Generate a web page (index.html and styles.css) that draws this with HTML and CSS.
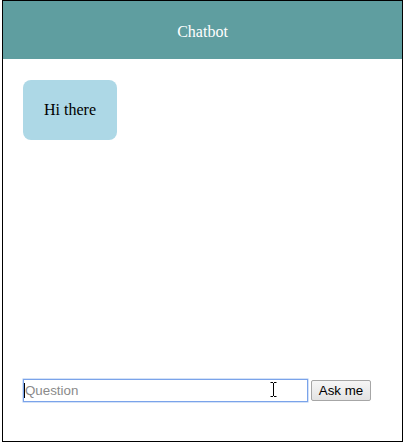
FILE: index.html
```html
<!DOCTYPE html>
<html>
<head>
<meta charset="utf-8">
<link rel="stylesheet" href="styles.css">
</head>
<body>
<div class="chat">
  <div class="header">Chatbot</div>
  <div class="messages">
    <div class="bubble">Hi there</div>
  </div>
  <form class="ask">
    <div class="field">
      <input class="question" type="text" placeholder="Question">
      <span class="caret"></span>
      <svg class="ibeam" width="7" height="15" viewBox="0 0 7 15"><path d="M0.5 0.5h2.5M4 0.5h2.5M3.5 1v13M0.5 14.5h2.5M4 14.5h2.5" stroke="#000" stroke-width="1" fill="none"/></svg>
    </div>
    <button class="btn" type="button">Ask me</button>
  </form>
</div>
</body>
</html>
```
FILE: styles.css
```css
html, body {
  margin: 0;
  padding: 0;
  background: #fff;
}
.chat {
  box-sizing: border-box;
  width: 401px;
  height: 442px;
  margin-left: 2px;
  border: 1px solid #000;
  display: flex;
  flex-direction: column;
  font-family: "Liberation Serif", "Times New Roman", serif;
  font-size: 16px;
}
.header {
  height: 58px;
  background: #5f9ea0;
  color: #fff;
  display: flex;
  align-items: center;
  justify-content: center;
  padding-top: 4px;
  box-sizing: border-box;
}
.messages {
  flex: 1;
  padding: 21px 20px 0;
}
.bubble {
  display: inline-block;
  background: #add8e6;
  border-radius: 8px;
  padding: 20px 21px;
  line-height: 20px;
  color: #000;
}
.ask {
  display: flex;
  align-items: center;
  gap: 3px;
  padding: 0 20px 39px;
  margin: 0;
}
.field {
  position: relative;
  display: flex;
}
.question {
  box-sizing: border-box;
  width: 285px;
  height: 23px;
  margin: 0;
  padding: 1px 1px;
  border: 1px solid #7aa3ea;
  outline: none;
  box-shadow: 0 0 0 0.5px #a9c5f0;
  font-family: "Liberation Sans", Arial, sans-serif;
  font-size: 13.33px;
  color: #000;
}
.question::placeholder {
  color: #8a8a8a;
}
.caret {
  position: absolute;
  left: 1px;
  top: 4px;
  width: 1px;
  height: 15px;
  background: #000;
}
.ibeam {
  position: absolute;
  left: 247px;
  top: 3px;
}
.btn {
  box-sizing: border-box;
  height: 21px;
  width: 60px;
  margin: 0;
  padding: 0 6px;
  border: 1px solid #a6a6a6;
  border-radius: 2px;
  background: linear-gradient(#f6f6f6, #e3e3e3);
  font-family: "Liberation Sans", Arial, sans-serif;
  font-size: 13.33px;
  color: #000;
}
```
